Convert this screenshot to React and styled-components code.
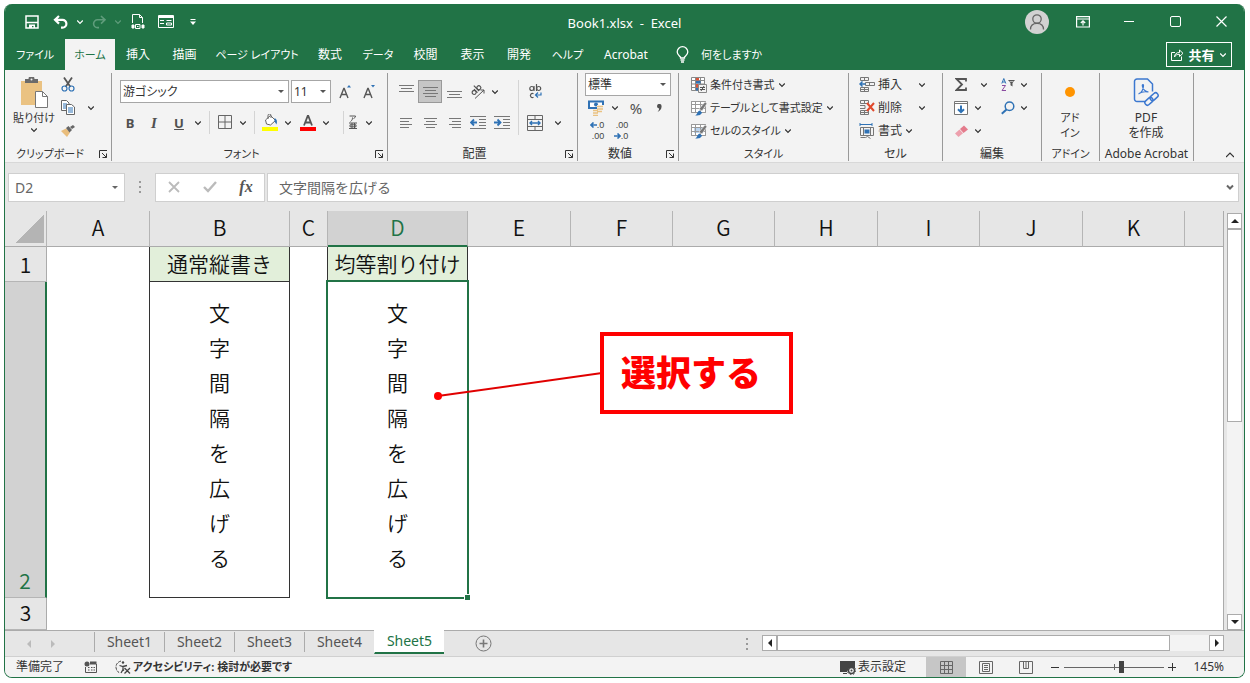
import { useState } from "react";
import styled, { createGlobalStyle, css } from "styled-components";

const UI_FONT = `"Noto Sans", "Noto Sans CJK JP", sans-serif`;
const CELL_FONT = `"Noto Sans CJK JP", sans-serif`;
const GREEN = "#217346";
const BLUE = "#2f72b5";

const GlobalStyle = createGlobalStyle`
  *, *::before, *::after { box-sizing: border-box; }
  body {
    margin: 0;
    background: #fff;
    color: #333;
    font: 12px/16px ${UI_FONT};
    font-feature-settings: "palt";
  }
  button, input, select {
    margin: 0;
    padding: 0;
    border: 0;
    border-radius: 0;
    background: none;
    color: inherit;
    font: inherit;
    font-feature-settings: inherit;
  }
  svg { display: block; flex: none; }
`;

/* ---------- icons ---------- */

const Svg = ({ w = 16, h = 16, children, ...rest }) => (
  <svg width={w} height={h} viewBox={`0 0 ${w} ${h}`} fill="none" stroke="currentColor" aria-hidden="true" {...rest}>
    {children}
  </svg>
);

const Chevron = ({ up }) => (
  <Svg w={8} h={6} strokeWidth="1.2">
    <path d={up ? "M0 5 4 1 8 5" : "M1.200 1.500 4 4.300 6.800 1.500"} />
  </Svg>
);

const Launcher = () => (
  <Svg w={10} h={10}>
    <path d="M1.500 9V1.500H9M4 4l4.500 4.500M8.500 4.500V8.500H4.500" />
  </Svg>
);

const SaveIcon = () => (
  <Svg w={14} h={14} strokeWidth="1.5">
    <path d="M1 1h12v12H1z" />
    <path d="M1 7.500h12" />
    <path d="M4 9.500h6V13H8.500v-2H7v2H4z" fill="currentColor" stroke="none" />
  </Svg>
);

const UndoIcon = ({ flip }) => (
  <Svg w={16} h={14} strokeWidth={flip ? 1.6 : 2.2}>
    <g transform={flip ? "matrix(-1 0 0 1 16 0)" : undefined}>
      <path d="M6 1 2 4.800 6 8.600M2 4.800h7.500a3.800 3.800 0 0 1 0 7.800H8" />
    </g>
  </Svg>
);

const PrintDocIcon = () => (
  <Svg w={14} h={15}>
    <path d="M1.500 9V.5h7l3 3V9M8.500.5v3h3" />
    <path d="M1 11h2v3H1zM11 11h2v3h-2z" fill="currentColor" />
    <path d="M4.500 10.500h4.500v4H4.500zM6 12.500h1.500" />
  </Svg>
);

const FormIcon = () => (
  <Svg w={16} h={13}>
    <path d="M.5.5h15v12H.5z" />
    <path d="M.5 2h15" strokeWidth="2" />
    <path d="M2 5.500h4M2 8.500h4M8.500 5.500h5M8.500 8h5v2h-5z" />
  </Svg>
);

const CustomizeIcon = () => (
  <Svg w={6} h={6}>
    <path d="M.5.500h5" />
    <path d="M0 2.500h6L3 6z" fill="currentColor" stroke="none" />
  </Svg>
);

const PasteIcon = () => (
  <Svg w={28} h={31}>
    <path d="M1 4h21v24H1z" fill="#eac282" stroke="none" />
    <path d="M5 6V2h3.500a3 3 0 0 1 6 0H18v4z" fill="#6a6a6a" stroke="none" />
    <circle cx="11.500" cy="2.500" r="1" fill="#f3f3f3" stroke="none" />
    <path d="M15.500 14.500h7l5 5v11h-12z" fill="#fff" stroke="#777" />
    <path d="M22.500 14.500v5h5" stroke="#777" />
  </Svg>
);

const CutIcon = () => (
  <Svg w={14} h={15}>
    <path d="M3 .5 9.500 10M11 .5 4.500 10" stroke="#555" strokeWidth="1.800" />
    <circle cx="3.500" cy="11.500" r="2.500" stroke={BLUE} strokeWidth="1.200" />
    <circle cx="10.500" cy="11.500" r="2.500" stroke={BLUE} strokeWidth="1.200" />
  </Svg>
);

const CopyIcon = () => (
  <Svg w={14} h={15} stroke="#666">
    <path d="M.5.5h5l2.500 2.500v7.500H.5z" fill="#fff" />
    <path d="M2 4h4M2 6h4M2 8h4" stroke={BLUE} />
    <path d="M5.500 4.500h5L13.500 7v7.500h-8z" fill="#fff" />
    <path d="M7 8h5M7 10h5M7 12h5" stroke={BLUE} />
  </Svg>
);

const BrushIcon = () => (
  <Svg w={14} h={12} stroke="none">
    <path d="M0 6 5 3.500 9 7.500 6 12z" fill="#e9bd7c" />
    <path d="M5 3 7.500 1 11 5 8.500 7.500z" fill="#666" />
    <path d="m9 2 3-2 2 2-3 2z" fill="#666" />
  </Svg>
);

const GrowFont = ({ down }) => (
  <Svg w={14} h={14}>
    <path d="M2 13 5.800 3.500h.4L10 13M3.500 9.500h5" stroke="#555" strokeWidth="1.400" />
    <path d={down ? "M9 0h4l-2 2.500z" : "M9 2.500h4L11 0z"} fill={BLUE} stroke="none" />
  </Svg>
);

const BordersIcon = () => (
  <Svg w={15} h={15} stroke="#666">
    <path d="M.5.5h13v13H.5zM7 .5v13M.5 7h13" />
  </Svg>
);

const FillIcon = () => (
  <Svg w={17} h={17}>
    <path d="M3.500 6 8.500 1.500l5 5-5 4.500-4-1z" fill="#fff" stroke="#666" />
    <path d="M6 5V1.500a1.500 1.500 0 0 1 3 0V4" stroke="#666" />
    <path d="M12.500 4c2.500 1 3 3.500 2 6.500l-2-3z" fill={BLUE} stroke="none" />
    <path d="M0 13h16v4H0z" fill="#ffff00" stroke="none" />
  </Svg>
);

const FontColorIcon = () => (
  <Svg w={16} h={16}>
    <path d="M4 10.500 7.700 1h.6L12 10.500M5.500 7.500h5" stroke="#555" strokeWidth="1.800" />
    <path d="M0 12h16v4H0z" fill="#f00" stroke="none" />
  </Svg>
);

const PhoneticIcon = () => (
  <Svg w={10} h={15} stroke="#555">
    <path d="M1.500 1h6c0 1.500-1 2-2 2.500M4.500 2.500c0 2-.5 3-2 4M1 8h8M1 13.500h8M4 8v5.500M6.500 8v5.500M2 9.800h6v2H2z" />
  </Svg>
);

const Lines = ({ rows, w = 15, h = 14 }) => (
  <Svg w={w} h={h} stroke="#777">
    {rows.map(([x1, x2, y]) => (
      <path key={y} d={`M${x1} ${y}.5H${x2}`} />
    ))}
  </Svg>
);

const IndentIcon = ({ right }) => (
  <Svg w={16} h={13} stroke="#777">
    <path d="M0 .5h16M9 3.500h7M9 6.500h7M9 9.500h7M0 12.500h16" />
    <path d={right ? "M0 6.500h6M3.500 3.500l3 3-3 3" : "M1 6.500h6M4 3.500l-3 3 3 3"} stroke={BLUE} strokeWidth="1.800" />
  </Svg>
);

const OrientIcon = () => (
  <Svg w={16} h={15} stroke="#555">
    <g transform="rotate(-45 7 7)" strokeWidth="1.200">
      <circle cx="4" cy="6" r="2" />
      <path d="M6.200 3.500v5M8.500 1v7.500" />
      <circle cx="10.600" cy="6" r="2" />
    </g>
    <path d="M5 14.500 14 6M10.500 6H14v3.500" />
  </Svg>
);

const WrapIcon = () => (
  <Svg w={13} h={15} stroke="#555" strokeWidth="1.200">
    <circle cx="2.800" cy="4.500" r="2" />
    <path d="M5 2v5M7.500 0v7" />
    <circle cx="9.700" cy="4.500" r="2" />
    <path d="M4.500 9.800a2 2 0 1 0 0 3.400" />
    <path d="M12 8.500v2.500H6.500M9 8.500 6.500 11 9 13.500" stroke={BLUE} />
  </Svg>
);

const MergeIcon = () => (
  <Svg w={16} h={16} stroke="#666">
    <path d="M.5.5h15v15H.5zM.5 4.500h15M.5 11.500h15M8 .5v4M8 11.500v4" />
    <path d="M3 8h10M5 6 3 8l2 2M11 6l2 2-2 2" stroke={BLUE} strokeWidth="1.400" />
  </Svg>
);

const CurrencyIcon = () => (
  <Svg w={16} h={16}>
    <path d="M1 1.500h14V8H1z" fill="#fff" stroke={BLUE} strokeWidth="2" />
    <circle cx="8" cy="4.500" r="2" fill={BLUE} stroke="none" />
    <path d="M9 5h7v8H9z" fill="#f3f3f3" stroke="none" />
    <path d="M9 6.500h6M9 9h6M9 11.500h5M5 10.500h5M5 13h5M5 15.500h5" stroke="#eac282" strokeWidth="1.600" />
  </Svg>
);

const Arrow = ({ right }) => (
  <Svg w={7} h={6} stroke={BLUE} strokeWidth="1.600">
    <path d={right ? "M0 3h6M3.500.5 6 3 3.500 5.500" : "M7 3H1M3.500.5 1 3l2.500 2.500"} />
  </Svg>
);

const CondIcon = () => (
  <Svg w={16} h={16} stroke="#888">
    <path d="M.5.5h13v13H.5zM.5 3.500h13M.5 7h13M.5 10.500h13M4.500.5v13M9.500.5v13" fill="#fff" />
    <path d="M5 1h3v2.500H5zM5 7h3v3.500H5z" fill="#d8553a" stroke="none" />
    <path d="M5 4h4.500v2.500H5zM5 11h2v2.500H5z" fill={BLUE} stroke="none" />
    <path d="M7.500 7.500h8v8h-8z" fill="#f3f3f3" />
    <path d="M9 10.500h5M9 12.500h5M13 9l-3 5" stroke="#555" />
  </Svg>
);

const StyleIcon = ({ tint }) => (
  <Svg w={16} h={16} stroke="#999">
    <path d="M.5 1.500h14v11H.5z" fill="#fff" />
    <path d="M3 4h9v6H3z" fill={tint} stroke="none" />
    <path d="M.5 1.500h14v11H.5zM.5 4.500h14M.5 8.500h14M4.500 1.500v11M9.500 1.500v11" />
    <path d="m8 9 6-7 2 1.500L11 11z" fill="#777" stroke="#f3f3f3" strokeWidth=".6" />
    <path d="M4 15.500c2 0 2-4 4.500-5l2.500 2c-1 3-4 3-7 3z" fill={BLUE} stroke="none" />
  </Svg>
);

const InsertCells = () => (
  <Svg w={16} h={15} stroke="#777">
    <path d="M1.500.5h8v3h-8zM5.500.5v3M1.500 10.500h8v4h-8zM5.500 10.500v4M6.500 5.500h9v3h-9zM10.500 5.500v3M1.500 12.500h8" />
    <path d="M6.500 7H1M3.500 4.500 1 7l2.500 2.500" stroke={BLUE} strokeWidth="1.500" />
  </Svg>
);

const DeleteCells = () => (
  <Svg w={16} h={15} stroke="#777">
    <path d="M1.500.5h8v3h-8zM5.500.5v3M1.500 10.500h8v4h-8zM5.500 10.500v4M1 5.500h5v3H1M1.500 12.500h8" />
    <path d="m8 3 7 8M15 3l-7 8" stroke="#e0492c" strokeWidth="2" />
  </Svg>
);

const FormatCells = () => (
  <Svg w={16} h={16} stroke="#777">
    <path d="M1 1.500h12M1 0v3M13 0v3" stroke={BLUE} />
    <path d="M1.500 4.500h13v8h-13zM4.500 4.500v8M11.500 4.500v8M1.500 14.500h5l2-1 3 2" />
    <path d="M5.500 6.500h5v4h-5z" fill={BLUE} stroke="none" />
  </Svg>
);

const SumIcon = () => (
  <Svg w={12} h={13} stroke="#555" strokeWidth="1.800">
    <path d="M11 3.500V1H1.500L7 6.500 1.500 12H11V9.500" />
  </Svg>
);

const FillDownIcon = () => (
  <Svg w={14} h={14} stroke="#777">
    <path d="M.5.5h13v13H.5z" fill="#fff" />
    <path d="M.5 2.500h13" />
    <path d="M7 4.500v6.500M4 8.200 7 11.200l3-3" stroke={BLUE} strokeWidth="2" />
  </Svg>
);

const EraserIcon = () => (
  <Svg w={13} h={12} stroke="none">
    <path d="m5 4 4-3.500 4 4L8.500 8z" fill="#e47b8c" />
    <path d="M4.500 4.500 0 8.500 3.500 12 8 8.300z" fill="#eda0ad" />
  </Svg>
);

const SortIcon = () => (
  <Svg w={15} h={13}>
    <path d="M.8 5.500 2.800.5l2 5M1.500 4h2.600" stroke={BLUE} />
    <path d="M1 7.500h3.500L1 12.500h4" stroke="#8a4ba0" />
    <path d="M7 2h7l-2.500 3v3.500l-2-1.200V5z" fill="#555" stroke="none" />
    <path d="M8.500 3.500h4" stroke="#f3f3f3" strokeWidth=".6" />
  </Svg>
);

const FindIcon = () => (
  <Svg w={14} h={14} stroke={BLUE} strokeWidth="1.500">
    <circle cx="8.500" cy="5.200" r="4.300" />
    <path d="M5.500 8.500.8 12.800" strokeWidth="2" />
  </Svg>
);

const PdfIcon = () => (
  <Svg w={27} h={29} stroke="#3c78d0" strokeWidth="1.500">
    <path d="M12 23.500H4A2.500 2.500 0 0 1 1.500 21V3.500A2.500 2.500 0 0 1 4 1h10.500l5 5v7.500" />
    <path d="M5.500 16c3-1 5-5 5-8.500 0-1.500-1.500-1.200-1.200.3.600 3.200 3 5.700 6.200 6.200M6 15.500c2.500-1.700 5-2.200 9-1.500" strokeWidth="1.200" />
    <g transform="rotate(-42 18.500 21)">
      <rect x="10.500" y="18.500" width="9" height="5" rx="2.500" />
      <rect x="17.500" y="18.500" width="9" height="5" rx="2.500" />
    </g>
  </Svg>
);

const BulbIcon = () => (
  <Svg w={13} h={17} strokeWidth="1.300">
    <path d="M4.500 12V11C3 9.500 1.200 8.500 1.200 6a5.300 5.300 0 0 1 10.600 0C11.800 8.500 10 9.500 8.500 11v1zM4.500 14h4M5 16h3" />
  </Svg>
);

const ShareIcon = () => (
  <Svg w={13} h={13}>
    <path d="M4 4.500H.5v8h10V8.500" />
    <path d="M3.500 9c0-3 2-4.500 5-4.500V2L12 5.300 8.500 8.500V6.300C6 6.300 4.500 7 3.500 9z" />
  </Svg>
);

const PersonIcon = () => (
  <Svg w={24} h={24} stroke="#666" strokeWidth="1.300">
    <circle cx="12" cy="12" r="12" fill="#d2d2d2" stroke="none" />
    <circle cx="12" cy="9" r="4.200" />
    <path d="M5.500 19.500c0-4 2.800-6.200 6.500-6.200s6.500 2.200 6.500 6.200" />
  </Svg>
);

const RibbonDisplayIcon = () => (
  <Svg w={14} h={12} strokeWidth="1.200">
    <path d="M.6.600h12.800v10.400H.6zM.6 3h12.800M7 9.500V5M4.800 7 7 4.800 9.200 7" />
  </Svg>
);

/* ---------- shell ---------- */

const Page = styled.div`
  display: flex;
  min-height: 100vh;
  padding: 4px 5px 5px 4px;
`;

const Window = styled.div`
  display: flex;
  flex: 1;
  flex-direction: column;
  min-width: 0;
  overflow: hidden;
  border: 1px solid ${GREEN};
  border-top: 0;
  border-radius: 8px;
  background: #e6e6e6;
`;

const Row = styled.div`
  display: flex;
  align-items: center;
  height: ${(p) => p.$h || 23}px;
`;

const Spacer = styled.span`
  flex: none;
  width: ${(p) => p.$w}px;
`;

const TitleBar = styled.header`
  display: grid;
  grid-template-columns: 1fr auto 1fr;
  align-items: center;
  height: 35px;
  background: ${GREEN};
  color: #fff;
`;

const QuickAccess = styled.div`
  display: flex;
  align-items: center;
  padding-left: 14px;
`;

const Title = styled.h1`
  margin: 0;
  padding-top: 2px;
  font-size: 13px;
  font-weight: 400;
  white-space: pre;
`;

const WindowButtons = styled.div`
  display: flex;
  align-items: center;
  justify-content: flex-end;
`;

const IconButton = styled.button`
  display: inline-flex;
  flex: none;
  align-items: center;
  justify-content: center;
  width: ${(p) => p.$w || 24}px;
  height: ${(p) => p.$h || 23}px;
  color: ${(p) => p.$color || "inherit"};
  ${(p) =>
    p.$active &&
    css`
      border: 1px solid #999;
      background: #c6c6c6;
    `}
`;

const Tabs = styled.nav`
  display: flex;
  height: 31px;
  background: ${GREEN};
  color: #fff;
`;

const Tab = styled.button`
  flex: none;
  width: ${(p) => p.$w}px;
  font-size: ${(p) => (p.$kana ? 11 : 12)}px;
  white-space: nowrap;
  ${(p) =>
    p.$active &&
    css`
      background: #f3f3f3;
      color: ${GREEN};
    `}
`;

const TellMe = styled.button`
  display: flex;
  align-items: center;
  gap: 12px;
  margin-left: 17px;
  font-size: 11px;
`;

const ShareButton = styled.button`
  display: flex;
  align-items: center;
  justify-content: space-between;
  width: 66px;
  height: 25px;
  margin: 3px 12px 0 auto;
  padding: 0 4px;
  border: 1px solid #fff;
  font-size: 13px;
  font-weight: 700;
`;

/* ---------- ribbon ---------- */

const Ribbon = styled.section`
  display: flex;
  height: 93px;
  padding: 3px 0 1px;
  border-bottom: 1px solid #d8d8d8;
  background: #f3f3f3;
`;

const GroupBox = styled.div`
  display: flex;
  flex: none;
  flex-direction: column;
  width: ${(p) => p.$w}px;
  border-right: 1px solid #999;
`;

const GroupBody = styled.div`
  display: flex;
  flex: 1;
  min-height: 0;
  padding-left: ${(p) => p.$pad || 0}px;
`;

const GroupFooter = styled.div`
  display: flex;
  align-items: center;
  height: 14px;
  font-size: ${(p) => (p.$small ? 11 : 12)}px;
  line-height: 12px;
  white-space: nowrap;
`;

const GroupName = styled.span`
  flex: 1;
  text-align: center;
`;

const Column = styled.div`
  display: flex;
  flex: none;
  flex-direction: column;
  align-items: ${(p) => p.$align || "stretch"};
  gap: ${(p) => p.$gap || 0}px;
  padding-top: ${(p) => p.$top || 0}px;
`;

const BigButton = styled.button`
  display: flex;
  flex-direction: column;
  align-items: center;
  width: ${(p) => p.$w}px;
  padding-top: 3px;
  font-size: ${(p) => (p.$large ? 12 : 11)}px;
  line-height: 15px;
`;

const BigIcon = styled.span`
  display: flex;
  align-items: center;
  justify-content: center;
  height: 32px;
`;

const BigText = styled.span`
  padding: 2px 0;
  white-space: nowrap;
`;

const TextTool = styled.button`
  display: flex;
  align-items: center;
  gap: 3px;
  height: 23px;
  font-size: ${(p) => (p.$large ? 12 : 11)}px;
  white-space: nowrap;
`;

const Glyph = styled.span`
  font-size: ${(p) => p.$size || 13}px;
  font-weight: ${(p) => (p.$light ? 400 : 700)};
  font-style: ${(p) => (p.$italic ? "italic" : "normal")};
  font-family: ${(p) => (p.$italic ? '"Liberation Serif", serif' : "inherit")};
  text-decoration: ${(p) => (p.$underline ? "underline" : "none")};
  color: #505050;
`;

const Divider = styled.span`
  flex: none;
  width: 1px;
  height: ${(p) => p.$h || 23}px;
  margin: ${(p) => p.$top || 0}px 4px 0;
  background: #d4d4d4;
`;

const SelectBox = styled.span`
  display: grid;
  flex: none;
  width: ${(p) => p.$w}px;
  height: 23px;
  border: 1px solid #a6a6a6;
  background: #fff;
  select,
  &::after {
    grid-area: 1 / 1;
  }
  select {
    appearance: none;
    padding-left: 2px;
    font-size: 12px;
  }
  &::after {
    content: "";
    align-self: center;
    justify-self: end;
    margin-right: 4px;
    border: 3px solid transparent;
    border-top-color: #555;
    border-bottom: 0;
    pointer-events: none;
  }
`;

const Decimals = styled.span`
  display: grid;
  justify-items: end;
  font: 9px/11px "Liberation Sans", sans-serif;
  color: #444;
`;

const DecimalRow = styled.span`
  display: flex;
  align-items: center;
`;

const Dot = styled.span`
  width: 10px;
  height: 10px;
  border-radius: 50%;
  background: #ff9400;
`;

const CollapseButton = styled(IconButton)`
  align-self: flex-end;
  margin-left: auto;
  margin-right: 2px;
  height: 12px;
`;

const DropButton = ({ w = 14, label = "その他", ...rest }) => (
  <IconButton $w={w} aria-label={label} {...rest}>
    <Chevron />
  </IconButton>
);

const Group = ({ name, width, pad, launcher, small, children }) => (
  <GroupBox $w={width}>
    <GroupBody $pad={pad}>{children}</GroupBody>
    <GroupFooter $small={small}>
      <GroupName>{name}</GroupName>
      {launcher && (
        <IconButton $w={16} $h={14} aria-label={`${name}の設定`}>
          <Launcher />
        </IconButton>
      )}
    </GroupFooter>
  </GroupBox>
);

const Select = ({ w, label, options }) => (
  <SelectBox $w={w}>
    <select aria-label={label}>
      {options.map((o) => (
        <option key={o}>{o}</option>
      ))}
    </select>
  </SelectBox>
);

/* ---------- formula bar ---------- */

const FormulaBar = styled.div`
  display: flex;
  align-items: center;
  height: 48px;
  padding: 0 5px 0 3px;
  color: #666;
`;

const Field = styled.div`
  display: flex;
  align-items: center;
  flex: ${(p) => (p.$w ? "none" : 1)};
  width: ${(p) => (p.$w ? `${p.$w}px` : "auto")};
  height: 29px;
  border: 1px solid #cfcfcf;
  background: #fff;
  input {
    flex: 1;
    min-width: 0;
    height: 27px;
    padding-left: ${(p) => (p.$w ? 6 : 11)}px;
    font-size: 14px;
    font-feature-settings: normal;
  }
`;

const Dots = styled.span`
  width: 2px;
  height: 12px;
  margin: 0 14px;
  background: repeating-linear-gradient(#999 0 2px, transparent 2px 5px);
`;

const Fx = styled.span`
  font: italic 700 16px/20px "Liberation Serif", serif;
  color: #555;
`;

const Triangle = styled.span`
  width: 0;
  height: 0;
  border: ${(p) => p.$size || 4}px solid transparent;
  ${(p) => `border-${p.$side}-color: ${p.$color || "#222"};`}
  ${(p) => `border-${{ top: "bottom", bottom: "top", left: "right", right: "left" }[p.$side]}: 0;`}
`;

/* ---------- sheet ---------- */

const Workspace = styled.main`
  display: flex;
  flex: 1;
  min-height: 0;
`;

const SheetArea = styled.div`
  position: relative;
  flex: 1;
  min-width: 0;
  overflow: hidden;
  border-right: 1px solid #ababab;
  background: #fff;
`;

const Sheet = styled.table`
  width: 100%;
  table-layout: fixed;
  border-collapse: separate;
  border-spacing: 0;
  font-family: ${CELL_FONT};
  font-size: 21px;
  line-height: 28px;
  font-feature-settings: normal;
  color: #111;
  th,
  td {
    padding: 0 0 3px;
    font-weight: 350;
    text-align: center;
    white-space: nowrap;
  }
`;

const Col = styled.col`
  width: ${(p) => (p.$w ? `${p.$w}px` : "auto")};
`;

const ColHead = styled.th`
  height: 36px;
  border-right: 1px solid #b5b5b5;
  border-bottom: ${(p) => (p.$active ? `2px solid ${GREEN}` : "1px solid #ababab")};
  background: ${(p) => (p.$active ? "#d2d2d2" : "#e6e6e6")};
  color: ${(p) => (p.$active ? GREEN : "inherit")};
  &:last-child {
    border-right: 0;
  }
`;

const Corner = styled.td`
  border-right: 1px solid #b5b5b5;
  border-bottom: 1px solid #ababab;
  background: linear-gradient(135deg, transparent 50%, #b4b4b4 50%) 11px 4px / 28px 28px no-repeat #e6e6e6;
`;

const RowHead = styled.th`
  height: ${(p) => p.$h}px;
  vertical-align: bottom;
  border-right: ${(p) => (p.$active ? `2px solid ${GREEN}` : "1px solid #ababab")};
  border-bottom: 1px solid #b5b5b5;
  background: ${(p) => (p.$active ? "#d2d2d2" : "#e6e6e6")};
  color: ${(p) => (p.$active ? GREEN : "inherit")};
`;

const Cell = styled.td`
  ${(p) =>
    p.$boxed &&
    css`
      position: relative;
      border-right: 1px solid #333;
      border-bottom: 1px solid #333;
      box-shadow: -1px 0 0 #333;
    `}
  background: ${(p) => (p.$title ? "#e2efda" : "transparent")};
`;

/* one character per line, spread over the cell height */
const VerticalText = styled.div`
  width: 21px;
  margin: 0 auto;
  padding-bottom: 6px;
  line-height: 35px;
  white-space: normal;
  line-break: anywhere;
`;

const Selection = styled.div`
  position: absolute;
  inset: -2px;
  border: 2px solid ${GREEN};
  &::after {
    content: "";
    position: absolute;
    right: -3px;
    bottom: -3px;
    width: 6px;
    height: 6px;
    border: 1px solid #fff;
    border-width: 1px 0 0 1px;
    background: ${GREEN};
  }
`;

const Callout = styled.div`
  position: absolute;
  top: 121px;
  left: 595px;
  width: 193px;
  height: 82px;
  padding-left: 17px;
  border: 4px solid #f00;
  background: #fff;
  color: #f00;
  font: 900 35px/70px ${CELL_FONT};
  font-feature-settings: normal;
`;

const Leader = styled.svg`
  position: absolute;
  top: 155px;
  left: 425px;
`;

const VScroll = styled.div`
  display: flex;
  flex: none;
  flex-direction: column;
  width: 20px;
  padding: 2px 2px 0 3px;
`;

const ScrollButton = styled.button`
  display: flex;
  flex: none;
  align-items: center;
  justify-content: center;
  width: 15px;
  height: 16px;
  border: 1px solid #ababab;
  background: #fff;
`;

const Track = styled.div`
  display: flex;
  flex: 1;
  flex-direction: ${(p) => (p.$vertical ? "column" : "row")};
  background: #f3f3f3;
`;

const Thumb = styled.div`
  flex: 0 0 ${(p) => p.$size};
  border: 1px solid #ababab;
  background: #fff;
`;

/* ---------- bottom bars ---------- */

const SheetTabs = styled.div`
  display: flex;
  height: 26px;
  border-top: 1px solid #ababab;
  color: #555;
`;

const SheetNav = styled.div`
  display: flex;
  align-items: center;
  gap: 20px;
  width: 89px;
  padding-left: 22px;
`;

const SheetTab = styled.button`
  width: 70px;
  height: 20px;
  margin-top: 1px;
  border-left: 1px solid #ababab;
  font-size: 14px;
  line-height: 16px;
  ${(p) =>
    p.$active &&
    css`
      height: 24px;
      margin-top: -1px;
      border-left-color: #fff;
      border-bottom: 2px solid ${GREEN};
      background: #fff;
      color: ${GREEN};
    `}
`;

const AddSheet = styled.button`
  display: flex;
  align-items: center;
  margin-left: 31px;
`;

const HScroll = styled.div`
  display: flex;
  flex: 0 1 462px;
  height: 16px;
  margin: 4px 20px 0 0;
`;

const TabSpacer = styled.div`
  display: flex;
  flex: 1;
  align-items: center;
  justify-content: flex-end;
`;

const StatusBar = styled.footer`
  display: flex;
  align-items: center;
  height: 21px;
  border-top: 1px solid #d0d0d0;
  background: #f3f3f3;
  padding: 0 20px 0 11px;
`;

const StatusText = styled.span`
  width: 68px;
  font-size: 12px;
`;

const StatusButton = styled.button`
  display: flex;
  align-items: center;
  gap: 2px;
  margin-left: ${(p) => p.$left || 0}px;
  margin-right: ${(p) => p.$right || 0}px;
  font-size: ${(p) => (p.$bold ? 11 : 12)}px;
  font-weight: ${(p) => (p.$bold ? 700 : 400)};
  white-space: nowrap;
`;

const ViewButton = styled.button`
  display: flex;
  align-items: center;
  justify-content: center;
  width: 40px;
  height: 20px;
  background: ${(p) => (p.$active ? "#c6c6c6" : "none")};
  color: #666;
`;

const Zoom = styled.input`
  appearance: none;
  width: 100px;
  height: 14px;
  background:
    linear-gradient(#666, #666) center / 1px 6px no-repeat,
    linear-gradient(#666, #666) center / 100% 1px no-repeat;
  &::-webkit-slider-thumb {
    appearance: none;
    width: 5px;
    height: 12px;
    background: #444;
  }
`;

const ZoomValue = styled.span`
  width: 44px;
  text-align: right;
`;

/* ---------- data ---------- */

const TABS = [
  { name: "ファイル", w: 60, kana: true },
  { name: "ホーム", w: 50, kana: true },
  { name: "挿入", w: 46 },
  { name: "描画", w: 47 },
  { name: "ページ レイアウト", w: 98, kana: true },
  { name: "数式", w: 48 },
  { name: "データ", w: 48, kana: true },
  { name: "校閲", w: 47 },
  { name: "表示", w: 47 },
  { name: "開発", w: 46 },
  { name: "ヘルプ", w: 51, kana: true },
  { name: "Acrobat", w: 66 },
];

const COLUMNS = [
  ["A", 103],
  ["B", 140],
  ["C", 38],
  ["D", 140],
  ["E", 103],
  ["F", 102],
  ["G", 102],
  ["H", 103],
  ["I", 102],
  ["J", 103],
  ["K", 102],
  ["", 0],
];

const ROWS = [
  { n: 1, h: 35, cells: { B: "通常縦書き", D: "均等割り付け" }, title: true },
  { n: 2, h: 316, cells: { B: "文字間隔を広げる", D: "文字間隔を広げる" } },
  { n: 3, h: 32, cells: {} },
];

const SHEETS = ["Sheet1", "Sheet2", "Sheet3", "Sheet4", "Sheet5"];

const top = [[0, 15, 3], [2, 13, 6], [0, 15, 9]];
const middle = [[0, 15, 3], [2, 13, 6], [0, 15, 9], [2, 13, 12]];
const bottom = [[0, 15, 7], [2, 13, 10], [0, 15, 13]];
const left = [[1, 13, 1], [1, 10, 4], [1, 13, 7], [1, 10, 10]];
const center = [[1, 14, 1], [3, 12, 4], [1, 14, 7], [3, 12, 10]];
const right = [[2, 14, 1], [5, 14, 4], [2, 14, 7], [5, 14, 10]];

/* ---------- parts ---------- */

const Header = () => (
  <TitleBar>
    <QuickAccess>
      <IconButton $w={26} aria-label="上書き保存"><SaveIcon /></IconButton>
      <IconButton $w={32} aria-label="元に戻す"><UndoIcon /></IconButton>
      <DropButton w={6} />
      <IconButton $w={32} $color="#5f9c7b" aria-label="やり直し"><UndoIcon flip /></IconButton>
      <DropButton w={6} $color="#5f9c7b" />
      <IconButton $w={34} aria-label="印刷プレビュー"><PrintDocIcon /></IconButton>
      <IconButton $w={22} aria-label="フォーム"><FormIcon /></IconButton>
      <IconButton $w={32} aria-label="カスタマイズ"><CustomizeIcon /></IconButton>
    </QuickAccess>
    <Title>{"Book1.xlsx  -  Excel"}</Title>
    <WindowButtons>
      <IconButton $w={46} $h={26} aria-label="アカウント"><PersonIcon /></IconButton>
      <IconButton $w={46} aria-label="リボンの表示オプション"><RibbonDisplayIcon /></IconButton>
      <IconButton $w={46} aria-label="最小化"><Svg w={10} h={10}><path d="M0 4.500h10" /></Svg></IconButton>
      <IconButton $w={46} aria-label="最大化"><Svg w={11} h={11}><rect x=".5" y=".5" width="10" height="10" rx="1.500" /></Svg></IconButton>
      <IconButton $w={46} aria-label="閉じる"><Svg w={11} h={11} strokeWidth="1.200"><path d="M.5.5l10 10M10.500.5l-10 10" /></Svg></IconButton>
    </WindowButtons>
  </TitleBar>
);

const RibbonTabs = () => {
  const [active, setActive] = useState("ホーム");
  return (
    <Tabs>
      {TABS.map(({ name, w, kana }) => (
        <Tab key={name} $w={w} $kana={kana} $active={name === active} onClick={() => setActive(name)}>
          {name}
        </Tab>
      ))}
      <TellMe>
        <BulbIcon />
        何をしますか
      </TellMe>
      <ShareButton>
        <ShareIcon />
        共有
        <Chevron />
      </ShareButton>
    </Tabs>
  );
};

const HomeRibbon = () => (
  <Ribbon>
    <Group name="クリップボード" width={107} pad={7} launcher small>
      <BigButton $w={44}>
        <BigIcon><PasteIcon /></BigIcon>
        <BigText>貼り付け</BigText>
        <Chevron />
      </BigButton>
      <Column>
        <IconButton aria-label="切り取り"><CutIcon /></IconButton>
        <Row>
          <IconButton aria-label="コピー"><CopyIcon /></IconButton>
          <DropButton w={22} />
        </Row>
        <IconButton aria-label="書式のコピー"><BrushIcon /></IconButton>
      </Column>
    </Group>

    <Group name="フォント" width={276} pad={8} launcher small>
      <Column $top={7} $gap={8}>
        <Row>
          <Select w={169} label="フォント" options={["游ゴシック"]} />
          <Spacer $w={2} />
          <Select w={40} label="フォント サイズ" options={["11"]} />
          <IconButton $w={28} aria-label="拡大"><GrowFont /></IconButton>
          <IconButton $w={20} aria-label="縮小"><GrowFont down /></IconButton>
        </Row>
        <Row>
          <IconButton $w={20} aria-label="太字"><Glyph>B</Glyph></IconButton>
          <IconButton $w={28} aria-label="斜体"><Glyph $italic $size={15}>I</Glyph></IconButton>
          <IconButton $w={22} aria-label="下線"><Glyph $underline>U</Glyph></IconButton>
          <DropButton w={15} />
          <Divider />
          <IconButton $w={22} aria-label="罫線"><BordersIcon /></IconButton>
          <DropButton />
          <Divider />
          <IconButton $w={22} aria-label="塗りつぶしの色"><FillIcon /></IconButton>
          <DropButton />
          <IconButton $w={26} aria-label="フォントの色"><FontColorIcon /></IconButton>
          <DropButton w={10} />
          <Spacer $w={8} />
          <Divider />
          <IconButton $w={10} aria-label="ふりがな"><PhoneticIcon /></IconButton>
          <DropButton w={22} />
        </Row>
      </Column>
    </Group>

    <Group name="配置" width={190} pad={6} launcher>
      <Column $top={7} $gap={8}>
        <Row>
          <IconButton aria-label="上揃え"><Lines rows={top} h={20} /></IconButton>
          <IconButton $active aria-label="上下中央揃え"><Lines rows={middle} h={16} /></IconButton>
          <IconButton aria-label="下揃え"><Lines rows={bottom} h={16} /></IconButton>
          <IconButton aria-label="方向"><OrientIcon /></IconButton>
          <DropButton w={10} />
        </Row>
        <Row>
          <IconButton aria-label="左揃え"><Lines rows={left} h={12} /></IconButton>
          <IconButton aria-label="中央揃え"><Lines rows={center} h={12} /></IconButton>
          <IconButton aria-label="右揃え"><Lines rows={right} h={12} /></IconButton>
          <IconButton aria-label="インデントを減らす"><IndentIcon /></IconButton>
          <IconButton aria-label="インデントを増やす"><IndentIcon right /></IconButton>
        </Row>
      </Column>
      <Divider $h={55} $top={7} />
      <Column $top={7} $gap={8}>
        <IconButton aria-label="折り返して全体を表示する"><WrapIcon /></IconButton>
        <Row>
          <IconButton aria-label="セルを結合して中央揃え"><MergeIcon /></IconButton>
          <DropButton w={22} />
        </Row>
      </Column>
    </Group>

    <Group name="数値" width={101} pad={7} launcher>
      <Column>
        <Select w={86} label="表示形式" options={["標準"]} />
        <Row>
          <IconButton $w={22} aria-label="通貨表示形式"><CurrencyIcon /></IconButton>
          <DropButton w={16} />
          <IconButton $w={26} aria-label="パーセント"><Glyph $light $size={15}>%</Glyph></IconButton>
          <IconButton $w={20} aria-label="桁区切り">
            <Svg w={5} h={8} stroke="none"><path d="M0 2.200a2.200 2.200 0 0 1 4.600 0C4.600 5 3 7 .5 8c1-1.200 1.600-2.300 1.600-3.600A2.200 2.200 0 0 1 0 2.200z" fill="#505050" /></Svg>
          </IconButton>
        </Row>
        <Row>
          <IconButton aria-label="小数点以下を増やす">
            <Decimals>
              <DecimalRow><Arrow />.0</DecimalRow>
              <DecimalRow>.00</DecimalRow>
            </Decimals>
          </IconButton>
          <IconButton aria-label="小数点以下を減らす">
            <Decimals>
              <DecimalRow>.00</DecimalRow>
              <DecimalRow><Arrow right />.0</DecimalRow>
            </Decimals>
          </IconButton>
        </Row>
      </Column>
    </Group>

    <Group name="スタイル" width={170} pad={12} small>
      <Column $align="flex-start">
        <TextTool><CondIcon />条件付き書式<Chevron /></TextTool>
        <TextTool><StyleIcon tint="#fff" />テーブルとして書式設定<Chevron /></TextTool>
        <TextTool><StyleIcon tint="#b9d3ee" />セルのスタイル<Chevron /></TextTool>
      </Column>
    </Group>

    <Group name="セル" width={94} pad={10}>
      <Column $align="flex-start">
        <Row><TextTool $large><InsertCells />挿入</TextTool><DropButton w={40} /></Row>
        <Row><TextTool $large><DeleteCells />削除</TextTool><DropButton w={40} /></Row>
        <TextTool $large><FormatCells />書式<Chevron /></TextTool>
      </Column>
    </Group>

    <Group name="編集" width={99} pad={7}>
      <Column>
        <Row><IconButton $w={22} aria-label="合計"><SumIcon /></IconButton><DropButton w={24} /></Row>
        <Row><IconButton $w={22} aria-label="フィル"><FillDownIcon /></IconButton><DropButton w={12} /></Row>
        <Row><IconButton $w={22} aria-label="クリア"><EraserIcon /></IconButton><DropButton w={12} /></Row>
      </Column>
      <Column>
        <Row><IconButton $w={24} aria-label="並べ替えとフィルター"><SortIcon /></IconButton><DropButton w={8} /></Row>
        <Row><IconButton $w={24} aria-label="検索と選択"><FindIcon /></IconButton><DropButton w={8} /></Row>
      </Column>
    </Group>

    <Group name="アドイン" width={58} small>
      <BigButton $w={56}>
        <BigIcon><Dot /></BigIcon>
        <BigText>アド<br />イン</BigText>
      </BigButton>
    </Group>

    <Group name="Adobe Acrobat" width={94}>
      <BigButton $w={92} $large>
        <BigIcon><PdfIcon /></BigIcon>
        <BigText>PDF<br />を作成</BigText>
      </BigButton>
    </Group>

    <CollapseButton aria-label="リボンを折りたたむ"><Chevron up /></CollapseButton>
  </Ribbon>
);

const FormulaRow = () => (
  <FormulaBar>
    <Field $w={117}>
      <input aria-label="名前ボックス" defaultValue="D2" />
      <IconButton $w={18} aria-label="名前の一覧"><Triangle $side="top" $size={3} $color="#666" /></IconButton>
    </Field>
    <Dots />
    <Field $w={110}>
      <IconButton $w={36} $color="#bbb" aria-label="キャンセル"><Svg w={12} h={12} strokeWidth="1.800"><path d="m1 1 10 10M11 1 1 11" /></Svg></IconButton>
      <IconButton $w={36} $color="#bbb" aria-label="入力"><Svg w={14} h={12} strokeWidth="2.400"><path d="m1 6 4 4 8-9" /></Svg></IconButton>
      <IconButton $w={36} aria-label="関数の挿入"><Fx>fx</Fx></IconButton>
    </Field>
    <Spacer $w={2} />
    <Field>
      <input aria-label="数式バー" defaultValue="文字間隔を広げる" />
      <IconButton $w={16} aria-label="数式バーの展開"><Svg w={8} h={6} strokeWidth="2"><path d="M1 1.500 4 4.500 7 1.500" /></Svg></IconButton>
    </Field>
  </FormulaBar>
);

const Grid = () => (
  <Workspace>
    <SheetArea>
      <Sheet>
        <colgroup>
          <Col $w={42} />
          {COLUMNS.map(([name, w]) => (
            <Col key={name} $w={w} />
          ))}
        </colgroup>
        <thead>
          <tr>
            <Corner />
            {COLUMNS.map(([name]) => (
              <ColHead key={name} scope="col" $active={name === "D"}>{name}</ColHead>
            ))}
          </tr>
        </thead>
        <tbody>
          {ROWS.map(({ n, h, cells, title }) => (
            <tr key={n}>
              <RowHead scope="row" $h={h} $active={n === 2}>{n}</RowHead>
              {COLUMNS.map(([name]) => (
                <Cell key={name} $boxed={!!cells[name]} $title={title && !!cells[name]}>
                  {title ? cells[name] : cells[name] && <VerticalText>{cells[name]}</VerticalText>}
                  {name === "D" && n === 2 && <Selection />}
                </Cell>
              ))}
            </tr>
          ))}
        </tbody>
      </Sheet>
      <Leader width="176" height="40" viewBox="0 0 176 40" aria-hidden="true">
        <path d="M8 30 172 7" stroke="#e00000" strokeWidth="2" />
        <circle cx="8" cy="30" r="4" fill="#f00" />
      </Leader>
      <Callout>選択する</Callout>
    </SheetArea>
    <VScroll>
      <ScrollButton aria-label="上へ"><Triangle $side="bottom" /></ScrollButton>
      <Track $vertical><Thumb $size="50%" /></Track>
      <ScrollButton aria-label="下へ"><Triangle $side="top" /></ScrollButton>
    </VScroll>
  </Workspace>
);

const SheetBar = () => {
  const [active, setActive] = useState("Sheet5");
  return (
    <SheetTabs>
      <SheetNav>
        <Triangle $side="right" $color="#bbb" />
        <Triangle $side="left" $color="#bbb" />
      </SheetNav>
      {SHEETS.map((name) => (
        <SheetTab key={name} $active={name === active} onClick={() => setActive(name)}>
          {name}
        </SheetTab>
      ))}
      <AddSheet aria-label="新しいシート">
        <Svg w={17} h={17} stroke="#777"><circle cx="8.500" cy="8.500" r="7.500" /><path d="M4.500 8.500h8M8.500 4.500v8" strokeWidth="1.600" /></Svg>
      </AddSheet>
      <TabSpacer><Dots /></TabSpacer>
      <HScroll>
        <ScrollButton aria-label="左へ"><Triangle $side="right" /></ScrollButton>
        <Track><Thumb $size="91%" /></Track>
        <ScrollButton aria-label="右へ"><Triangle $side="left" /></ScrollButton>
      </HScroll>
    </SheetTabs>
  );
};

const Status = () => (
  <StatusBar>
    <StatusText>準備完了</StatusText>
    <StatusButton aria-label="マクロの記録">
      <Svg w={13} h={12} stroke="#555">
        <circle cx="3" cy="3" r="2.500" fill="#555" stroke="none" />
        <path d="M6 2h6.500" strokeWidth="3" />
        <path d="M12.500 3v8.500h-11V6M4 6.500h1.500M7 6.500h1.500M9.500 6.500H11M4 9h1.500M7 9h1.500M9.500 9H11" />
      </Svg>
    </StatusButton>
    <StatusButton $bold $left={18}>
      <Svg w={16} h={14} stroke="#444">
        <path d="M6 1C2.500 2 .8 4.500 1 7.500 1.200 10 2.500 12 5 13" strokeDasharray="3 1" />
        <circle cx="8" cy="2.500" r="1.200" fill="#444" stroke="none" />
        <path d="M4.500 5.500 8 6.500l4-1M8 6.500v3L6 13M8 9.500l1 1M9.500 8l5.500 5.500M15 8l-5.500 5.500" strokeWidth="1.300" />
      </Svg>
      アクセシビリティ: 検討が必要です
    </StatusButton>
    <TabSpacer>
      <StatusButton $right={20}>
        <Svg w={16} h={15}>
          <path d="M0 1h15v7H9l-2 4H0z" fill="#444" stroke="none" />
          <path d="M3 13.500h4" stroke="#444" />
          <circle cx="11.500" cy="10.500" r="3" fill="#f3f3f3" stroke="#444" strokeWidth="1.400" />
          <circle cx="11.500" cy="10.500" r="4.200" stroke="#444" strokeDasharray="1.500 1.800" />
          <circle cx="11.500" cy="10.500" r="1" fill="#444" stroke="none" />
        </Svg>
        表示設定
      </StatusButton>
      <ViewButton $active aria-label="標準">
        <Svg w={13} h={13}><path d="M.5.5h12v12H.5zM.5 4.500h12M.5 8.500h12M4.500.5v12M8.500.5v12" /></Svg>
      </ViewButton>
      <ViewButton aria-label="ページ レイアウト">
        <Svg w={14} h={13}><path d="M.5.5h13v12H.5zM3.500 2.500h7v8h-7zM5 4.500h4M5 6.500h4M5 8.500h4" /></Svg>
      </ViewButton>
      <ViewButton aria-label="改ページ プレビュー">
        <Svg w={14} h={13}><path d="M.5.5h13v12H.5zM4.500.5v7h5v-7M7 .5v7" /></Svg>
      </ViewButton>
      <IconButton $w={18} $h={16} aria-label="縮小"><Svg w={8} h={8}><path d="M0 4.500h8" /></Svg></IconButton>
      <Zoom type="range" min="0" max="100" defaultValue="58" aria-label="ズーム" />
      <IconButton $w={16} $h={16} aria-label="拡大"><Svg w={8} h={8}><path d="M0 4.500h8M4.500 0v8" /></Svg></IconButton>
      <ZoomValue>145%</ZoomValue>
    </TabSpacer>
  </StatusBar>
);

const App = () => (
  <Page>
    <GlobalStyle />
    <Window>
      <Header />
      <RibbonTabs />
      <HomeRibbon />
      <FormulaRow />
      <Grid />
      <SheetBar />
      <Status />
    </Window>
  </Page>
);

export default App;
